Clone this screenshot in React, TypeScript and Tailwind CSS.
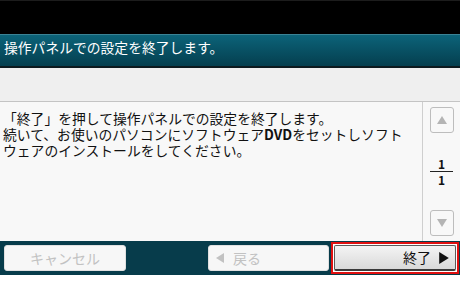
import React from "react";

const font = { fontFamily: '"Noto Sans CJK JP", "Noto Sans", sans-serif' };

function Tri({ dir, className }: { dir: "up" | "down" | "left" | "right"; className?: string }) {
  const pts = {
    up: "0,8 5,0 10,8",
    down: "0,0 10,0 5,8",
    left: "8,0 8,10 0,5",
    right: "0,0 0,10 8,5",
  }[dir];
  const w = dir === "up" || dir === "down" ? 10 : 8;
  const h = dir === "up" || dir === "down" ? 8 : 10;
  return (
    <svg width={w} height={h} viewBox={`0 0 ${w} ${h}`} className={className}>
      <polygon points={pts} fill="currentColor" />
    </svg>
  );
}

export default function App() {
  return (
    <div className="w-[468px] h-[282px] bg-white" style={font}>
      <div className="w-[460px] h-[275px] flex flex-col">
        <div className="h-[34px] bg-black border-t border-[#1c1c1c]" />
        <div className="h-[34px] flex flex-col bg-gradient-to-b from-[#0c6379] to-[#053f4f] border-t border-[#3b8294] border-b-2 border-b-[#0d1a1f]">
          <div className="px-[4px] pt-[2px] text-[13.8px] leading-[20px] text-white">
            操作パネルでの設定を終了します。
          </div>
        </div>
        <div className="h-[34px] bg-[#efefef] border-b border-[#c4c4c4]" />
        <div className="flex-1 flex bg-[#f8f8f8]">
          <div className="flex-1 pl-[3px] pr-[10px] pt-[8px] text-[13.8px] leading-[16px] text-[#111]">
            「終了」を押して操作パネルでの設定を終了します。
            <br />
            続いて、お使いのパソコンにソフトウェア<span className="font-bold">DVD</span>をセットしソフトウェアのインストールをしてください。
          </div>
          <div className="w-[38px] border-l border-[#cfcfcf] flex flex-col items-center justify-between py-[5px]">
            <div className="w-[24px] h-[26px] rounded-[3px] border border-[#bdbdbd] bg-[#f8f8f8] flex items-center justify-center text-[#b4b4b4]">
              <Tri dir="up" />
            </div>
            <div className="flex flex-col items-center font-bold text-[12px] leading-[13px] text-[#111]">
              <span>1</span>
              <div className="w-[23px] h-[1px] bg-[#222] my-[1px]" />
              <span>1</span>
            </div>
            <div className="w-[24px] h-[26px] rounded-[3px] border border-[#bdbdbd] bg-[#f8f8f8] flex items-center justify-center text-[#b4b4b4]">
              <Tri dir="down" />
            </div>
          </div>
        </div>
        <div className="h-[34px] bg-[#073c4b] flex items-center">
          <div className="ml-[4px] w-[122px] h-[26px] rounded-[3px] bg-[#f7f7f7] border border-[#e0e0e0] flex items-center justify-center text-[14px] text-[#c2c2c2]">
            キャンセル
          </div>
          <div className="ml-[82px] w-[121px] h-[26px] rounded-[3px] bg-[#f7f7f7] border border-[#e0e0e0] flex items-center pl-[7px] text-[14px] text-[#c2c2c2]">
            <Tri dir="left" className="mr-[9px]" />
            戻る
          </div>
          <div className="ml-auto mr-[1px] w-[128px] h-[32px] border-2 border-[#e01010] bg-white p-[1px]">
            <div className="h-full rounded-[2px] border border-[#5a5a5a] border-b-2 border-b-[#3a3a3a] bg-gradient-to-b from-[#f4f4f4] to-[#d9d9d9] flex items-center justify-end pr-[6px] text-[14px] text-[#111]">
              終了
              <Tri dir="right" className="ml-[8px] w-[10px] h-[12px]" />
            </div>
          </div>
        </div>
      </div>
    </div>
  );
}
